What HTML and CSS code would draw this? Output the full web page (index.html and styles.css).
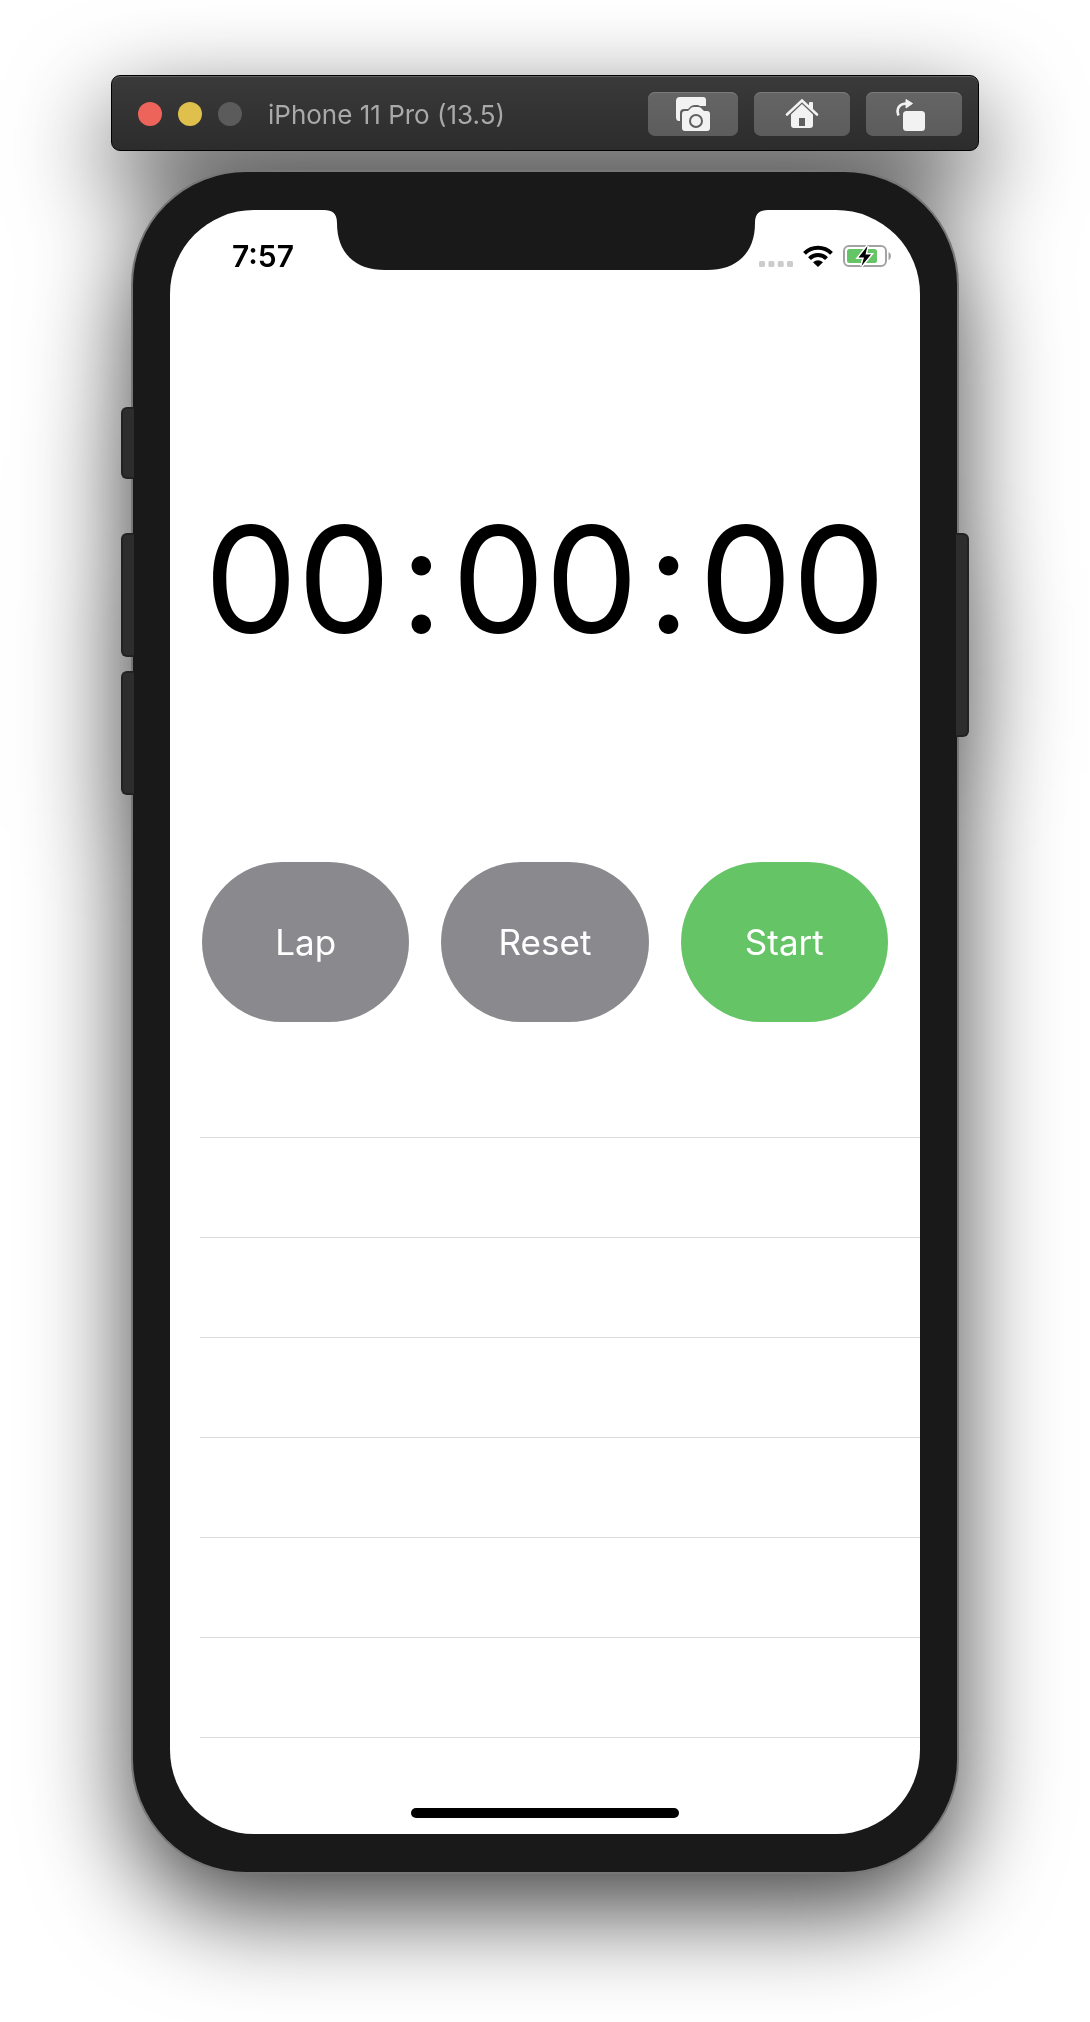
FILE: index.html
```html
<!DOCTYPE html>
<html lang="en">
<head>
<meta charset="utf-8">
<meta name="viewport" content="width=device-width, initial-scale=1">
<title>iPhone 11 Pro (13.5)</title>
<link rel="stylesheet" href="styles.css">
</head>
<body>
<main class="simulator">
  <header class="titlebar">
    <div class="lights">
      <button class="light light-close" aria-label="Close"></button>
      <button class="light light-minimize" aria-label="Minimize"></button>
      <button class="light light-zoom" aria-label="Zoom" disabled></button>
    </div>
    <h1 class="title">iPhone 11 Pro (13.5)</h1>
    <div class="tools">
      <button class="tool tool-narrow" aria-label="Screenshot">
        <svg width="34" height="34" viewBox="0 0 34 34">
          <path fill="#f2f2f2" d="M4 0H27Q30 0 30 3V9H24L22 8H18L15 9L12 12H8Q4 12 4 16V24H3Q0 24 0 20V4Q0 0 4 0Z"/>
          <path fill="#f2f2f2" fill-rule="evenodd" d="M9 14H12L15 11Q16 10 18 10H22Q24 10 25 11L28 14H31Q34 14 34 17V31Q34 34 31 34H9Q6 34 6 31V17Q6 14 9 14ZM20 17A7 7 0 1 0 20 31A7 7 0 1 0 20 17ZM20 19A5 5 0 1 1 20 29A5 5 0 1 1 20 19Z"/>
        </svg>
      </button>
      <button class="tool" aria-label="Home">
        <svg width="34" height="32" viewBox="0 0 34 32">
          <path fill="none" stroke="#f2f2f2" stroke-width="2.6" stroke-linecap="round" d="M2 16.5L17 2.5L32 16.5"/>
          <path fill="#f2f2f2" d="M24 5Q24 4 25 4H27Q28 4 28 5V12L24 8Z"/>
          <path fill="#f2f2f2" fill-rule="evenodd" d="M17 6L28 16.500V27Q28 30 25 30H9Q6 30 6 27V16.500ZM14 20V28H20V20Z"/>
        </svg>
      </button>
      <button class="tool" aria-label="Rotate">
        <svg width="38" height="34" viewBox="0 0 38 34">
          <path fill="none" stroke="#f2f2f2" stroke-width="2.6" d="M3.500 18.500C1 12 4 6.500 12 6.500"/>
          <path fill="#f2f2f2" stroke="#f2f2f2" stroke-linejoin="round" d="M11 2.500L17.500 6.500L11 11Z"/>
          <rect x="8" y="14" width="22" height="20" rx="3.500" fill="#f2f2f2"/>
        </svg>
      </button>
    </div>
  </header>

  <section class="phone">
    <span class="key key-mute"></span>
    <span class="key key-up"></span>
    <span class="key key-down"></span>
    <span class="key key-power"></span>
    <div class="screen">
      <svg class="notch" width="444" height="60" viewBox="0 0 444 60" aria-hidden="true">
        <path fill="#191919" d="M0 0H444C436 0 431 3 431 13C431 43 413 60 383 60H61C31 60 13 43 13 13C13 3 8 0 0 0Z"/>
      </svg>
      <div class="status">
        <span class="clock">7:57</span>
        <div class="indicators">
          <svg width="34" height="22" viewBox="0 0 34 22" aria-hidden="true">
            <g fill="#ccc">
              <rect x="0" y="16" width="6" height="6" rx="1.500"/>
              <rect x="9.400" y="16" width="6" height="6" rx="1.500"/>
              <rect x="18.700" y="16" width="6" height="6" rx="1.500"/>
              <rect x="28" y="16" width="6" height="6" rx="1.500"/>
            </g>
          </svg>
          <svg width="30" height="22" viewBox="0 0 30 22" aria-hidden="true">
            <g fill="none" stroke="#000" stroke-width="4">
              <path d="M1.500 8.300A19 19 0 0 1 28.500 8.300"/>
              <path d="M6.500 13.600A12 12 0 0 1 23.500 13.600"/>
            </g>
            <path d="M15 22L10 17.200Q15 13.500 20 17.200Z"/>
          </svg>
          <svg width="48" height="22" viewBox="0 0 48 22" aria-hidden="true">
            <rect x="1" y="1" width="42" height="20" rx="5" fill="none" stroke="#a3a3a3" stroke-width="2"/>
            <path fill="#a3a3a3" d="M45.500 7Q48 8 48 11T45.500 15Z"/>
            <rect x="4" y="4" width="30" height="14" rx="2.500" fill="#65c466"/>
            <path fill="#000" stroke="#fff" stroke-width="3" paint-order="stroke" d="M24.500 1L15.500 12.500H21L18.500 21L28 9.500H22.500Z"/>
          </svg>
        </div>
      </div>

      <div class="timer" role="timer">
        <span>00</span><span>:</span><span>00</span><span>:</span><span>00</span>
      </div>

      <div class="actions">
        <button class="action">Lap</button>
        <button class="action">Reset</button>
        <button class="action action-start">Start</button>
      </div>

      <ul class="laps">
        <li></li><li></li><li></li><li></li><li></li><li></li><li></li>
      </ul>

      <div class="home-indicator"></div>
    </div>
  </section>
</main>
</body>
</html>
```
FILE: styles.css
```css
* {
  box-sizing: border-box;
}

body {
  margin: 0;
  background: #fff;
  font-family: Inter, "Liberation Sans", sans-serif;
}

button {
  margin: 0;
  padding: 0;
  border: 0;
  font: inherit;
}

.simulator {
  max-width: 868px;
  margin: 0 auto;
  padding: 75px 0 150px;
  filter: drop-shadow(0 36px 50px rgba(0, 0, 0, 0.74));
}

.titlebar {
  display: flex;
  align-items: center;
  height: 76px;
  padding: 2px 16px 0 26px;
  border: 1px solid #000;
  border-radius: 9px;
  background: linear-gradient(#3a3a3a, #2c2c2c);
  box-shadow: inset 0 1px 0 #606060;
}

.lights {
  display: flex;
  gap: 16px;
}

.light {
  width: 24px;
  height: 24px;
  border-radius: 50%;
}

.light-close {
  background: #ed655a;
}

.light-minimize {
  background: #e0c04c;
}

.light-zoom {
  background: #5b5b5b;
}

.title {
  margin: 0 0 0 26px;
  padding-top: 2px;
  color: #a9a9a9;
  font-size: 26px;
  font-weight: 400;
  line-height: 32px;
}

.tools {
  display: flex;
  gap: 16px;
  margin-left: auto;
}

.tool {
  display: flex;
  align-items: center;
  justify-content: center;
  width: 96px;
  height: 44px;
  border-radius: 7px;
  background: linear-gradient(#656565, #5c5c5c);
  box-shadow: inset 0 1px 0 #7a7a7a;
}

.tool-narrow {
  width: 90px;
}

.phone {
  position: relative;
  margin: 19px 20px 0;
  padding: 38px 37px;
  border: 2px solid #777;
  border-radius: 115px;
  background: #191919;
}

.key {
  position: absolute;
  left: -12px;
  width: 13px;
  border: 2px solid #222;
  border-right: 0;
  border-radius: 6px 0 0 6px;
  background: #2d2d2d;
}

.key-mute {
  top: 235px;
  height: 72px;
}

.key-up {
  top: 361px;
  height: 124px;
}

.key-down {
  top: 499px;
  height: 124px;
}

.key-power {
  top: 361px;
  right: -12px;
  left: auto;
  height: 204px;
  border: 2px solid #222;
  border-left: 0;
  border-radius: 0 6px 6px 0;
}

.screen {
  position: relative;
  display: flex;
  flex-direction: column;
  border-radius: 84px;
  background: #fff;
  overflow: hidden;
}

.notch {
  position: absolute;
  top: 0;
  left: 50%;
  margin-left: -221px;
}

.status {
  display: flex;
  align-items: center;
  justify-content: space-between;
  height: 92px;
  padding: 0 29px 0 62px;
}

.clock {
  font-size: 30px;
  font-weight: 600;
  line-height: 32px;
}

.indicators {
  display: flex;
  gap: 10px;
}

.timer {
  display: flex;
  align-items: center;
  justify-content: center;
  gap: 9px;
  height: 560px;
  padding-bottom: 4px;
  font-size: 148px;
  line-height: 176px;
}

.actions {
  display: grid;
  grid-template-columns: repeat(3, 1fr);
  gap: 32px;
  padding: 0 32px;
}

.action {
  height: 160px;
  border-radius: 80px;
  background: #8a898e;
  color: #fff;
  font-size: 35px;
  line-height: 44px;
}

.action-start {
  background: #65c466;
}

.laps {
  margin: 16px 0 0 30px;
  padding: 0;
  list-style: none;
}

.laps li {
  height: 100px;
  border-bottom: 1px solid #dcdcdc;
}

.home-indicator {
  width: 268px;
  height: 10px;
  margin: 70px auto 16px;
  border-radius: 5px;
  background: #000;
}
```
